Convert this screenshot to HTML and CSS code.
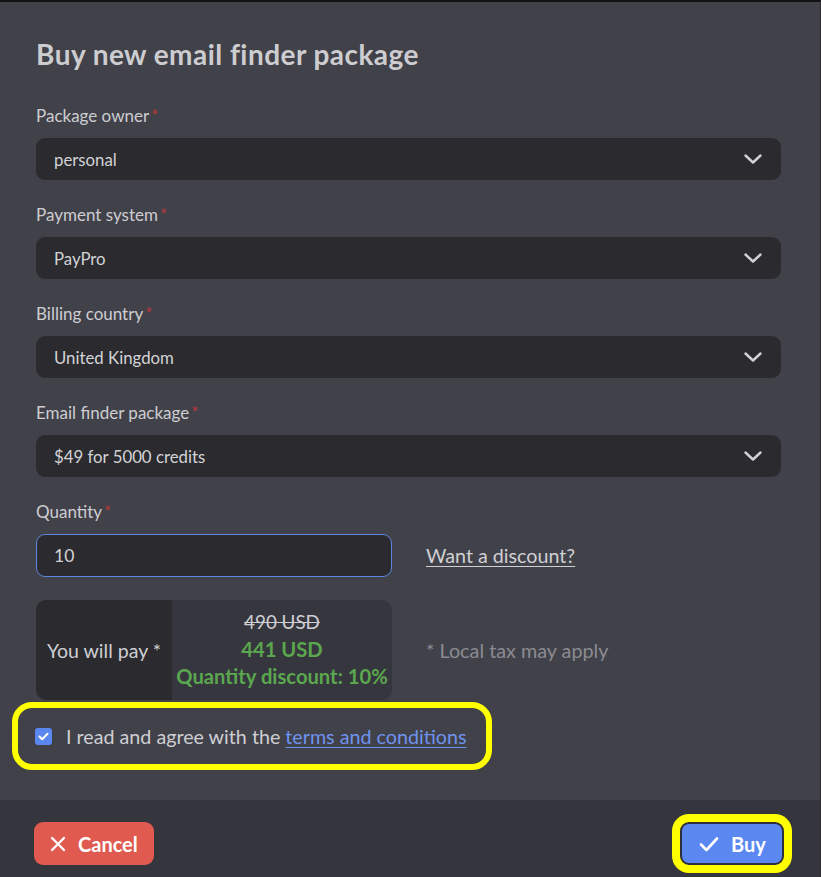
FILE: index.html
```html
<!DOCTYPE html>
<html lang="en">
<head>
<meta charset="utf-8">
<title>Buy new email finder package</title>
<link rel="stylesheet" href="styles.css">
</head>
<body>
<div class="modal">
  <div class="content">
    <h1 class="title">Buy new email finder package</h1>

    <div class="group">
      <div class="label">Package owner<span class="req">*</span></div>
      <div class="select"><span>personal</span>
        <svg class="chev" viewBox="0 0 18 10" width="18" height="10"><path d="M1.5 1.5 L9 8.5 L16.5 1.5" fill="none" stroke="#d2d2d6" stroke-width="2.4" stroke-linecap="round" stroke-linejoin="round"/></svg>
      </div>
    </div>

    <div class="group">
      <div class="label">Payment system<span class="req">*</span></div>
      <div class="select"><span>PayPro</span>
        <svg class="chev" viewBox="0 0 18 10" width="18" height="10"><path d="M1.5 1.5 L9 8.5 L16.5 1.5" fill="none" stroke="#d2d2d6" stroke-width="2.4" stroke-linecap="round" stroke-linejoin="round"/></svg>
      </div>
    </div>

    <div class="group">
      <div class="label">Billing country<span class="req">*</span></div>
      <div class="select"><span>United Kingdom</span>
        <svg class="chev" viewBox="0 0 18 10" width="18" height="10"><path d="M1.5 1.5 L9 8.5 L16.5 1.5" fill="none" stroke="#d2d2d6" stroke-width="2.4" stroke-linecap="round" stroke-linejoin="round"/></svg>
      </div>
    </div>

    <div class="group">
      <div class="label">Email finder package<span class="req">*</span></div>
      <div class="select"><span>$49 for 5000 credits</span>
        <svg class="chev" viewBox="0 0 18 10" width="18" height="10"><path d="M1.5 1.5 L9 8.5 L16.5 1.5" fill="none" stroke="#d2d2d6" stroke-width="2.4" stroke-linecap="round" stroke-linejoin="round"/></svg>
      </div>
    </div>

    <div class="group">
      <div class="label">Quantity<span class="req">*</span></div>
      <div class="row">
        <div class="input">10</div>
        <a class="discount" href="#">Want a discount?</a>
      </div>
    </div>

    <div class="row pay-row">
      <div class="paybox">
        <div class="pay-label">You will pay *</div>
        <div class="pay-values">
          <div class="old">490 USD</div>
          <div class="new">441 USD</div>
          <div class="disc">Quantity discount: 10%</div>
        </div>
      </div>
      <div class="tax">* Local tax may apply</div>
    </div>

    <div class="agree">
      <span class="checkbox"><svg viewBox="0 0 12 10" width="11" height="9"><path d="M1.5 5 L4.5 8 L10.5 2" fill="none" stroke="#fff" stroke-width="2.2" stroke-linecap="round" stroke-linejoin="round"/></svg></span>
      <span class="agree-text">I read and agree with the <a href="#" class="terms">terms and conditions</a></span>
    </div>
  </div>

  <div class="footer">
    <button class="btn cancel"><svg viewBox="0 0 16 16" width="16" height="16"><path d="M2 2 L14 14 M14 2 L2 14" stroke="#fff" stroke-width="2.4" stroke-linecap="round"/></svg>Cancel</button>
    <button class="btn buy"><svg viewBox="0 0 20 16" width="20" height="16"><path d="M2 8.5 L7.5 14 L18 2.5" fill="none" stroke="#fff" stroke-width="2.6" stroke-linecap="round" stroke-linejoin="round"/></svg>Buy</button>
  </div>
</div>
</body>
</html>
```

FILE: styles.css
```css
html, body {
  margin: 0;
  padding: 0;
  background: #41414a;
}
body {
  font-family: Lato, "Open Sans", "Noto Sans", sans-serif;
  color: #cfcfd3;
}
.modal {
  width: 820px;
  height: 875px;
  border-top: 2px solid #121214;
  border-right: 1px solid #2c2c31;
  background: #41414a;
  display: flex;
  flex-direction: column;
}
.content {
  padding: 36px 39px 0 36px;
  flex: 1;
}
.title {
  margin: 0 0 35px 0;
  font-size: 28px;
  line-height: 32px;
  font-weight: 700;
  color: #cdcdd0;
  letter-spacing: 0.45px;
}
.group {
  margin-bottom: 24px;
}
.label {
  font-size: 17px;
  line-height: 22px;
  margin-bottom: 11px;
  color: #cdcdd1;
}
.req {
  color: #b8393a;
  margin-left: 2px;
}
.select {
  height: 42px;
  background: #2a2a2f;
  border-radius: 9px;
  display: flex;
  align-items: center;
  justify-content: space-between;
  padding: 0 19px 0 18px;
  font-size: 16.8px;
  color: #d3d3d6;
}
.chev {
  display: block;
}
.row {
  display: flex;
  align-items: center;
  gap: 34px;
}
.input {
  box-sizing: border-box;
  width: 356px;
  height: 43px;
  border: 1px solid #5d86e0;
  border-radius: 9px;
  background: #2a2a2f;
  display: flex;
  align-items: center;
  padding-left: 17px;
  font-size: 17.5px;
  color: #d3d3d6;
}
.discount {
  font-size: 19.7px;
  color: #d0d0d4;
  text-decoration: underline;
  text-underline-offset: 3px;
}
.pay-row {
  margin-top: -1px;
}
.paybox {
  width: 356px;
  height: 100px;
  border-radius: 10px;
  overflow: hidden;
  display: flex;
  font-size: 19.5px;
}
.pay-label {
  width: 136px;
  background: #2a2a2f;
  display: flex;
  align-items: center;
  justify-content: center;
  color: #cfcfd3;
}
.pay-values {
  flex: 1;
  background: #36363e;
  display: flex;
  flex-direction: column;
  align-items: center;
  padding-top: 8px;
  line-height: 27.5px;
}
.old {
  text-decoration: line-through;
  color: #cfcfd3;
  font-size: 18.8px;
}
.new, .disc {
  color: #5ba74f;
  font-weight: 700;
  font-size: 20.2px;
}
.tax {
  font-size: 19.8px;
  color: #8b8b91;
}
.agree {
  display: inline-flex;
  align-items: center;
  margin: 2px 0 0 -24px;
  height: 26px;
  padding: 15px 20px 15px 17px;
  border: 6px solid #ffff00;
  border-radius: 20px;
  font-size: 19.7px;
}
.checkbox {
  width: 17px;
  height: 17px;
  border-radius: 3px;
  background: #5b88f0;
  display: inline-flex;
  align-items: center;
  justify-content: center;
  margin-right: 14px;
}
.agree-text {
  color: #cfcfd3;
}
.terms {
  color: #6e93ee;
  text-decoration: underline;
  text-underline-offset: 3px;
}
.footer {
  height: 77px;
  background: #35353d;
  display: flex;
  justify-content: space-between;
  align-items: flex-start;
  padding: 22px 28px 0 34px;
  box-sizing: border-box;
}
.btn {
  height: 43px;
  border: none;
  border-radius: 9px;
  font-family: Lato, "Open Sans", sans-serif;
  font-weight: 700;
  font-size: 20px;
  color: #ffffff;
  display: inline-flex;
  align-items: center;
  gap: 12px;
  padding: 0;
  cursor: pointer;
}
.cancel {
  width: 120px;
  background: #e05a50;
  padding-left: 16px;
}
.buy {
  width: 104px;
  background: #5b88f0;
  border: 2px solid #2e2e3c;
  box-shadow: 0 0 0 8px #ffff00;
  border-radius: 9px;
  padding-left: 17px;
  margin-right: 8px;
}
```
